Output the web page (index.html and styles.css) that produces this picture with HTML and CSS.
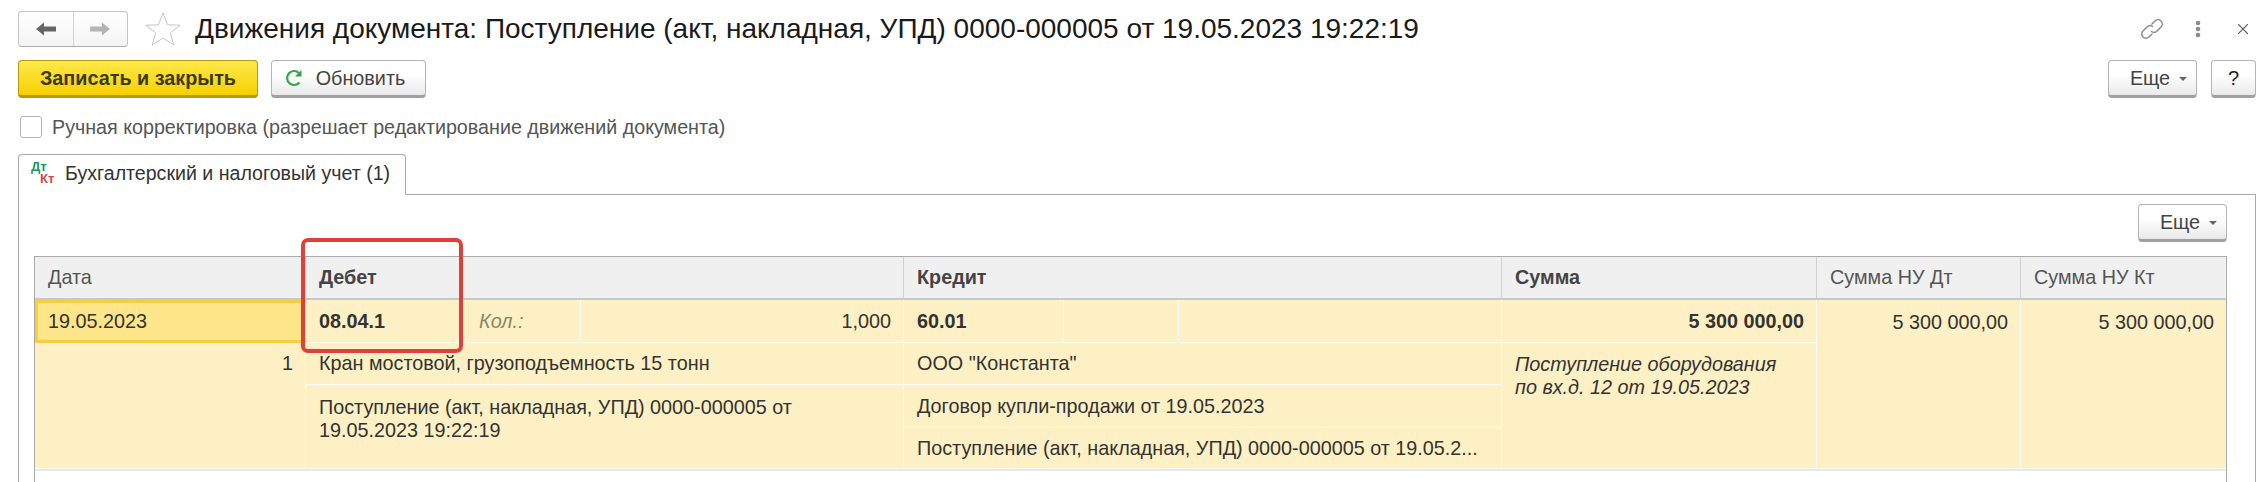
FILE: index.html
```html
<!DOCTYPE html>
<html>
<head>
	<meta charset="utf-8">
	<title>Движения документа</title>
	<link rel="stylesheet" href="styles.css">
</head>
<body>
	<div class="page">
		<div class="head">
			<div class="nav">
				<span class="nav__btn">
					<svg width="22" height="16" viewBox="0 0 22 16"><path d="M1 8 9 1.500V5.500H21V10.500H9V14.500Z" fill="#666"/></svg>
				</span>
				<span class="nav__btn">
					<svg width="22" height="16" viewBox="0 0 22 16"><path d="M21 8 13 1.500V5.500H1V10.500H13V14.500Z" fill="#b4b4b4"/></svg>
				</span>
			</div>
			<svg class="star" width="36" height="34" viewBox="0 0 36 34"><path d="M18 1 22.600 12.800 35 13.200 25.300 21 28.800 33 18 26 7.200 33 10.700 21 1 13.200 13.400 12.800Z" fill="#fff" stroke="#c4c4c4"/></svg>
			<h1 class="title">Движения документа: Поступление (акт, накладная, УПД) 0000-000005 от 19.05.2023 19:22:19</h1>
			<div class="head__tools">
				<svg width="24" height="24" viewBox="0 0 24 24" fill="none" stroke="#8c8c8c" stroke-width="1.500" stroke-linecap="round"><path d="M12 7 15 4a4.200 4.200 0 0 1 6 6L17 14a4.200 4.200 0 0 1-5.500.5"/><path d="M12 17 9 20a4.200 4.200 0 0 1-6-6L7 10a4.200 4.200 0 0 1 5.500-.5"/></svg>
				<svg class="head__dots" width="6" height="18" viewBox="0 0 6 18" fill="#8c8c8c"><circle cx="3" cy="3" r="2.300"/><circle cx="3" cy="9" r="2.300"/><circle cx="3" cy="15" r="2.300"/></svg>
				<svg class="head__close" width="10" height="10" viewBox="0 0 10 10" stroke="#555" stroke-width="1.100"><path d="M0 0 10 10M10 0 0 10"/></svg>
			</div>
		</div>

		<div class="bar">
			<a class="btn btn_main">Записать и закрыть</a>
			<a class="btn btn_refresh">
				<svg width="20" height="20" viewBox="0 0 20 20" fill="none"><path d="M15.500 14.500A7 7 0 1 1 15 5" stroke="#35a53f" stroke-width="2.200"/><path d="M17.500 2V8.500H11Z" fill="#35a53f"/></svg>
				Обновить
			</a>
			<div class="bar__right">
				<a class="btn btn_more">Еще <i class="caret"></i></a>
				<a class="btn btn_help">?</a>
			</div>
		</div>

		<label class="check">
			<span class="check__box"></span>
			Ручная корректировка (разрешает редактирование движений документа)
		</label>

		<div class="tabs">
			<div class="tab">
				<span class="tab__ico"><b class="tab__dt">Дт</b><b class="tab__kt">Кт</b></span>
				Бухгалтерский и налоговый учет (1)
			</div>
		</div>

		<div class="panel">
			<div class="panel__bar">
				<a class="btn btn_more">Еще <i class="caret"></i></a>
			</div>

			<div class="table-wrap">
				<div class="frame"></div>
				<div class="grid">
					<div class="th">Дата</div>
					<div class="th th_b c3">Дебет</div>
					<div class="th th_b c3">Кредит</div>
					<div class="th th_b">Сумма</div>
					<div class="th">Сумма НУ Дт</div>
					<div class="th th_last">Сумма НУ Кт</div>

					<div class="td td_sel">19.05.2023</div>
					<div class="td td_b">08.04.1</div>
					<div class="td td_label">Кол.:</div>
					<div class="td td_r">1,000</div>
					<div class="td td_b">60.01</div>
					<div class="td"></div>
					<div class="td"></div>
					<div class="td td_b td_r">5 300 000,00</div>
					<div class="td td_r r4 col9">5 300 000,00</div>
					<div class="td td_r r4 col10 td_last">5 300 000,00</div>

					<div class="td td_r r3 col1">1</div>
					<div class="td c3">Кран мостовой, грузоподъемность 15 тонн</div>
					<div class="td c3">ООО "Константа"</div>
					<div class="td td_note r3 col8">Поступление оборудования<br>по вх.д. 12 от 19.05.2023</div>

					<div class="td td_wrap c3 r2">Поступление (акт, накладная, УПД) 0000-000005 от<br>19.05.2023 19:22:19</div>
					<div class="td c3">Договор купли-продажи от 19.05.2023</div>
					<div class="td c3 td_clip">Поступление (акт, накладная, УПД) 0000-000005 от 19.05.2...</div>
				</div>
			</div>
		</div>
	</div>
</body>
</html>
```

FILE: styles.css
```css
html, body {
	margin: 0;
	height: 100%;
	background: #fff;
}

body {
	overflow: hidden;
	font-family: "Liberation Sans", Arial, sans-serif;
	font-size: 19.800px;
	color: #333;
}

.page {
	height: 482px;
	overflow: hidden;
	padding: 11px 7px 0 18px;
	box-sizing: border-box;
}


.head {
	display: flex;
	align-items: center;
	height: 36px;
}
	.nav {
		display: flex;
		width: 110px;
		height: 36px;
		box-sizing: border-box;
		border: 1px solid #c4c4c4;
		border-bottom-color: #aaa;
		border-radius: 4px;
		background: linear-gradient(#fff, #f4f4f4);
	}
		.nav__btn {
			flex: 1;
			display: flex;
			align-items: center;
			justify-content: center;
		}
		.nav__btn + .nav__btn {
			border-left: 1px solid #d4d4d4;
		}

	.star {
		margin-left: 17px;
	}

	.title {
		margin: 0 0 0 14px;
		font-size: 28px;
		font-weight: normal;
		color: #1a1a1a;
		white-space: nowrap;
	}

	.head__tools {
		margin-left: auto;
		display: flex;
		align-items: center;
		padding: 0 8px 0 0;
	}
		.head__dots { margin-left: 31px; }
		.head__close { margin-left: 37px; }


.bar {
	display: flex;
	margin-top: 13px;
	height: 38px;
}
	.bar__right {
		margin-left: auto;
		display: flex;
		gap: 14px;
	}

.btn {
	display: flex;
	align-items: center;
	justify-content: center;
	box-sizing: border-box;
	height: 38px;
	border: 1px solid #b4b4b4;
	border-bottom: 3px solid #a0a0a0;
	border-radius: 4px;
	background: linear-gradient(#fff 40%, #e9e9e9);
	color: #444;
}
.btn_main {
	width: 240px;
	border-color: #b8980f;
	background: linear-gradient(#ffe94a, #f6d000);
	color: #3c3a14;
	font-weight: bold;
}
.btn_refresh {
	width: 155px;
	margin-left: 13px;
	padding-right: 8px;
	gap: 12px;
}
.btn_more {
	width: 89px;
	padding-left: 12px;
	gap: 9px;
}
.btn_help {
	width: 45px;
	color: #222;
	font-size: 20px;
}

.caret {
	width: 0;
	height: 0;
	margin-top: 2px;
	border: 4px solid transparent;
	border-top-color: #666;
	border-bottom: 0;
}


.check {
	display: flex;
	align-items: center;
	gap: 10px;
	margin: 18px 0 0 2px;
	height: 22px;
	color: #555;
	font-size: 19.700px;
}
	.check__box {
		width: 20px;
		height: 20px;
		border: 1px solid #b4b4b4;
		border-radius: 3px;
		background: #fff;
	}


.tabs {
	display: flex;
	margin-top: 16px;
}
	.tab {
		display: flex;
		align-items: center;
		gap: 9px;
		width: 388px;
		height: 41px;
		box-sizing: border-box;
		margin-bottom: -1px;
		padding: 0 0 4px 12px;
		border: 1px solid #aaa;
		border-bottom: 0;
		border-radius: 4px 4px 0 0;
		background: #fff;
		color: #333;
		font-size: 19.600px;
		position: relative;
		z-index: 1;
	}
		.tab__ico {
			display: flex;
			flex-direction: column;
			width: 25px;
			font-size: 13px;
			line-height: 12px;
		}
		.tab__dt { color: #1c9a5a; }
		.tab__kt { color: #d0484c; margin-left: 9px; }

.panel {
	height: 400px;
	padding: 9px 28px 0 15px;
	border: 1px solid #aaa;
}
	.panel__bar {
		display: flex;
		justify-content: flex-end;
		height: 52px;
	}

.table-wrap {
	position: relative;
	height: 300px;
	border: 1px solid #aaa;
	border-bottom: 0;
}

/* красная рамка поверх таблицы */
.frame {
	position: absolute;
	left: 266px;
	top: -19px;
	width: 154px;
	height: 107px;
	border: 4px solid #e0403a;
	border-radius: 7px;
	z-index: 2;
}

.grid {
	display: grid;
	grid-template-columns: 271px 160px 115px 323px 160px 115px 323px 315px 204px 1fr;
	grid-template-rows: 43px 43px 42px 43px 41px;
	background: #fdf0c4;
	border-bottom: 2px solid #e8e8e8;
}
	.th, .td {
		display: flex;
		align-items: center;
		box-sizing: border-box;
		padding: 0 12px 0 13px;
		min-width: 0;
		white-space: nowrap;
		border-right: 1px solid #fffdf5;
		border-bottom: 1px solid #fffdf5;
	}
	.th {
		background: #f0f0f0;
		color: #555;
		border-right-color: #d0d0d0;
		border-bottom: 2px solid #c8c8c8;
	}
	.th_b { font-weight: bold; color: #444; }
	.th_last, .td_last { border-right: 0; }

	.c3 { grid-column: span 3; }
	.r4 { grid-row: span 4; }
	.r3 { grid-row: span 3; }
	.r2 { grid-row: span 2; }
	.col1 { grid-column: 1; }
	.col8 { grid-column: 8; }
	.col9 { grid-column: 9; }
	.col10 { grid-column: 10; }

	.td { color: #333; }
	.td_b { font-weight: bold; }
	.td_r { justify-content: flex-end; }
	.r4.td_r { align-items: flex-start; padding-top: 11px; }
	.r3.col1 { align-items: flex-start; padding-top: 9px; }
	.td_label { font-style: italic; color: #8a8468; }
	.td_sel {
		background: #fde58a;
		border: 3px solid #f5cf3f;
		border-right: 0;
		border-left-width: 3px;
		padding-left: 10px;
	}
	.td_note {
		display: block;
		font-style: italic;
		line-height: 23px;
		padding-top: 10px;
	}
	.td_wrap {
		display: block;
		white-space: normal;
		line-height: 23px;
		padding-top: 11px;
	}
	.td_clip { overflow: hidden; }
```
